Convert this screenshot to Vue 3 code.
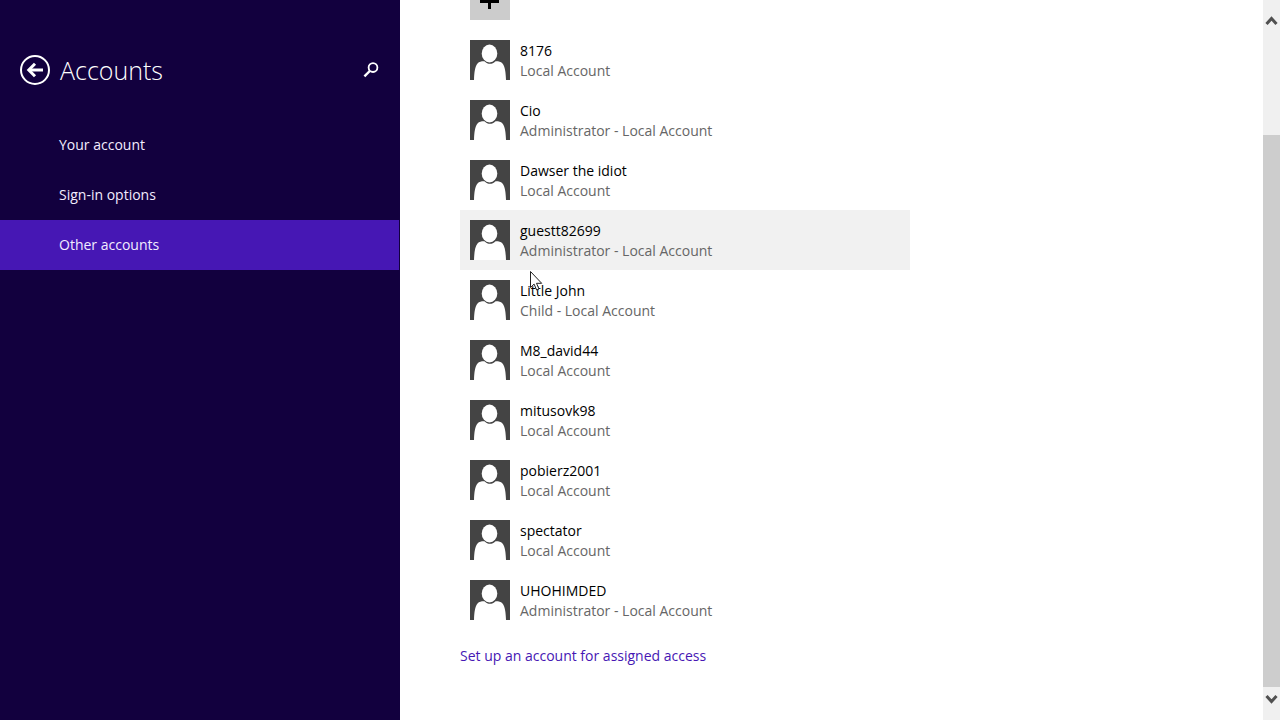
<script setup>
const navItems = [
  { label: 'Your account', active: false },
  { label: 'Sign-in options', active: false },
  { label: 'Other accounts', active: true },
]

const accounts = [
  { name: '8176', role: 'Local Account' },
  { name: 'Cio', role: 'Administrator - Local Account' },
  { name: 'Dawser the idiot', role: 'Local Account' },
  { name: 'guestt82699', role: 'Administrator - Local Account', hovered: true },
  { name: 'Little John', role: 'Child - Local Account' },
  { name: 'M8_david44', role: 'Local Account' },
  { name: 'mitusovk98', role: 'Local Account' },
  { name: 'pobierz2001', role: 'Local Account' },
  { name: 'spectator', role: 'Local Account' },
  { name: 'UHOHIMDED', role: 'Administrator - Local Account' },
]
</script>

<template>
  <div class="settings">
    <aside class="sidebar">
      <header class="heading">
        <button class="icon-button" type="button" aria-label="Back">
          <svg width="30" height="30" viewBox="0 0 30 30" fill="none" stroke="#fff">
            <circle cx="15" cy="15" r="14" stroke-width="2" />
            <path d="M23 15H9" stroke-width="3" />
            <path d="M15 8.800L8.800 15l6.200 6.200" stroke-width="3" />
          </svg>
        </button>
        <h1 class="title">Accounts</h1>
        <button class="icon-button" type="button" aria-label="Search">
          <svg width="16" height="16" viewBox="0 0 16 16" fill="none" stroke="#fff">
            <circle cx="10" cy="5.600" r="4.400" stroke-width="1.800" />
            <path d="M6.800 9L1.400 14.400" stroke-width="2.400" />
          </svg>
        </button>
      </header>
      <nav class="nav">
        <a
          v-for="item in navItems"
          :key="item.label"
          href="#"
          class="nav-item"
          :class="{ active: item.active }"
        >{{ item.label }}</a>
      </nav>
    </aside>

    <main class="content">
      <button class="row" type="button" aria-label="Add an account">
        <span class="add-tile">
          <svg width="40" height="40" viewBox="0 0 40 40" stroke="#000">
            <path d="M10 21h19" stroke-width="4" />
            <path d="M19.500 11v18" stroke-width="3" />
          </svg>
        </span>
      </button>
      <button
        v-for="account in accounts"
        :key="account.name"
        type="button"
        class="row"
        :class="{ hovered: account.hovered }"
      >
        <svg class="avatar" width="40" height="40" viewBox="0 0 40 40">
          <rect width="40" height="40" fill="#444" />
          <path
            d="M4 40C4.300 32 5 26.500 7.500 23.500C9.500 21.300 13 21.200 14.800 21.400C17.600 24.600 22.400 24.600 25.200 21.400C27 21.200 30.500 21.300 32.500 23.500C35 26.500 35.700 32 36 40Z"
            fill="#fff"
          />
          <ellipse cx="19.500" cy="13.500" rx="7.800" ry="9" fill="#fff" />
        </svg>
        <span class="details">
          <span class="name">{{ account.name }}</span>
          <span class="role">{{ account.role }}</span>
        </span>
      </button>
      <a href="#" class="assigned">Set up an account for assigned access</a>
    </main>

    <div class="scrollbar" aria-hidden="true">
      <svg class="arrow" width="17" height="40" viewBox="0 0 17 40" fill="none" stroke="#505050" stroke-width="3">
        <path d="M3.500 24l5-5.500 5 5.500" />
      </svg>
      <div class="track"><div class="thumb"></div></div>
      <svg class="arrow" width="17" height="33" viewBox="0 0 17 33" fill="none" stroke="#505050" stroke-width="3">
        <path d="M3.500 9l5 5.500 5-5.500" />
      </svg>
    </div>

    <svg class="cursor" width="13" height="20" viewBox="0 0 13 20" aria-hidden="true">
      <path d="M0.500 0.500v16l3.600-3.400 2.500 5.900 2.400-1-2.500-5.700h5.200z" fill="#fff" stroke="#222" />
    </svg>
  </div>
</template>

<style>
body {
  margin: 0;
}
</style>

<style scoped>
.settings {
  position: relative;
  display: flex;
  min-height: 100vh;
  overflow: hidden;
  background: #fff;
  color: #000;
  font: 14px/20px "Segoe UI", "Open Sans", "Noto Sans", sans-serif;
}

button {
  padding: 0;
  border: 0;
  background: none;
  font: inherit;
  color: inherit;
  text-align: left;
}

svg {
  display: block;
  flex: none;
}

a {
  text-decoration: none;
}

.sidebar {
  flex: none;
  width: 400px;
  background: #12003e;
  color: #fff;
}

.heading {
  display: flex;
  align-items: center;
  gap: 10px;
  height: 40px;
  padding: 50px 21px 30px 20px;
}

.title {
  flex: 1;
  margin: 0;
  font-size: 25px;
  font-weight: 300;
  line-height: 40px;
}

.nav-item {
  display: block;
  margin-right: 1px;
  padding: 15px 59px;
  color: #f2ecff;
}

.nav-item.active {
  background: #4617b4;
}

.content {
  flex: 1;
  min-width: 0;
  margin-top: -30px;
  padding: 0 60px 50px;
}

.row {
  display: flex;
  align-items: flex-start;
  gap: 10px;
  box-sizing: border-box;
  width: 100%;
  max-width: 450px;
  height: 60px;
  padding: 10px 10px 9px;
}

.row.hovered {
  background: #f1f1f1;
}

.add-tile {
  background: #ccc;
}

.details {
  padding-top: 1px;
}

.name,
.role {
  display: block;
}

.role {
  color: #666;
}

.assigned {
  display: inline-block;
  margin-top: 16px;
  color: #4617b4;
}

.scrollbar {
  display: flex;
  flex: none;
  flex-direction: column;
  width: 17px;
  background: #f0f0f0;
}

.track {
  display: flex;
  flex: 1;
  flex-direction: column;
  padding-top: 95px;
}

.thumb {
  flex: 1;
  background: #cdcdcd;
}

.cursor {
  position: absolute;
  top: 271px;
  left: 530px;
}
</style>
